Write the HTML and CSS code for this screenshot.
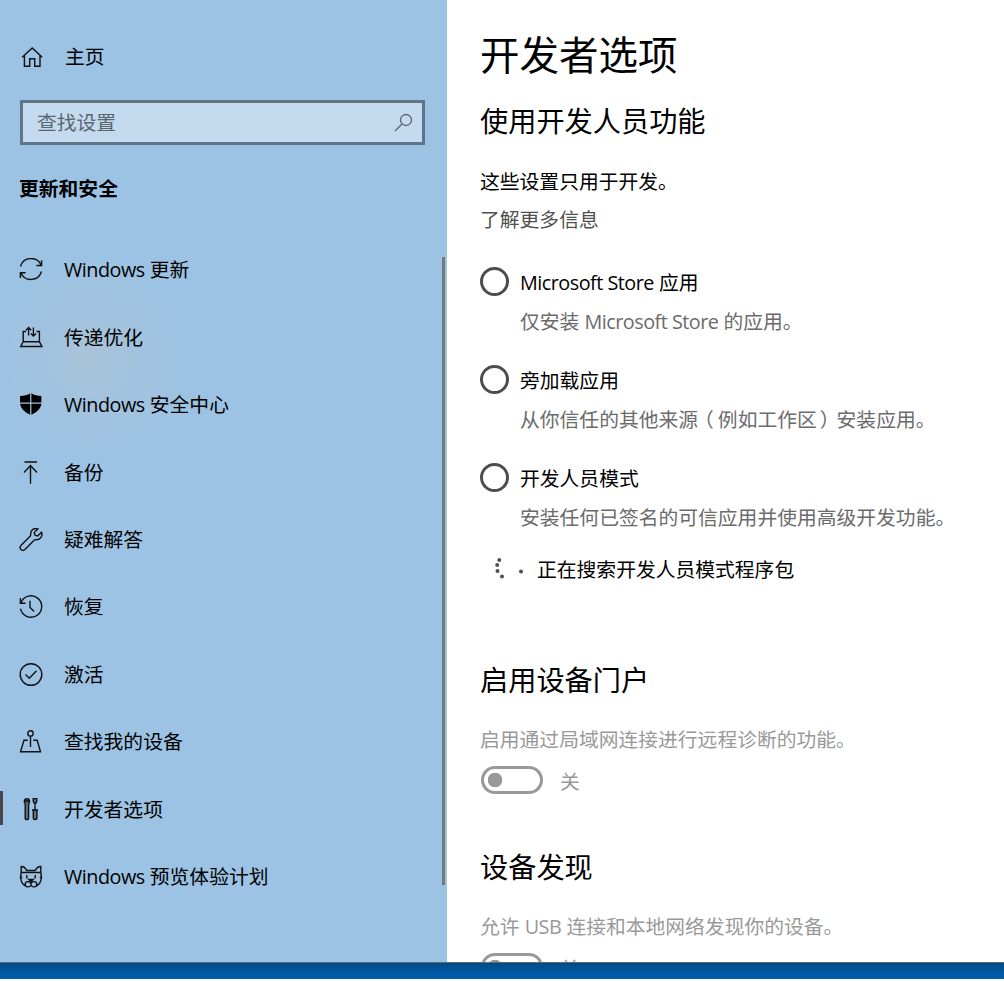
FILE: index.html
```html
<!DOCTYPE html>
<html lang="zh-CN">

<head>
    <meta charset="UTF-8" />
    <meta name="viewport" content="width=device-width, initial-scale=1.0" />
    <title>设置</title>
    <link rel="stylesheet" href="styles.css">
</head>

<body>
    <div class="window">
        <aside class="sidebar">
            <a class="home">
                <svg class="icon" viewBox="0 0 24 24"><path d="M2.2 11.3 12.2 1.9l10 9.4M4.4 9.5v10.8h5.3v-7.5h5v7.5h5.3V9.5" /></svg>
                <span>主页</span>
            </a>
            <div class="search">
                <span>查找设置</span>
                <svg class="search-icon" viewBox="0 0 20 20"><circle cx="12" cy="8" r="5.5" /><path d="M8 12 1 19" /></svg>
            </div>
            <h3 class="category">更新和安全</h3>

            <nav class="nav">
                <a class="nav-item">
                    <svg class="icon" viewBox="0 0 24 24"><path d="M1.5 8.5a11 11 0 0 1 20.7-1.2M22.6 2.2v5.3h-5.2M22.5 13.5a11 11 0 0 1-20.7 1.2M1.4 20v-5.3h5.2" /></svg>
                    <span><span class="latin">Windows</span> 更新</span>
                </a>
                <a class="nav-item">
                    <svg class="icon" viewBox="0 0 24 24"><path d="M7 5.5H4.2v10.200M17.500 5.500h2.900v10.200M4.200 15.700h16.200l2.500 4.800H1.700zM9.600 9.500V1.700M7 4.200l2.600-2.600 2.600 2.600M14.400 1.500v8.500M11.800 7.500l2.600 2.600L17 7.500" /></svg>
                    <span>传递优化</span>
                </a>
                <a class="nav-item">
                    <svg class="icon solid" viewBox="0 0 24 24"><path d="M11.2.3v9.3H1V3C5 3 8.8 2 11.2.3zM12.4.3c2.4 1.7 6.2 2.7 10 2.7v6.6h-10zM1.100 10.800h10.100v11C6 19.300 1.700 16 1.100 10.800zM12.400 10.800h10c-.6 5.200-4.800 8.500-10 11z" /></svg>
                    <span><span class="latin">Windows</span> 安全中心</span>
                </a>
                <a class="nav-item">
                    <svg class="icon" viewBox="0 0 24 24"><path d="M5.5 1H18M11.500 22.800V4.700M5 11.400l6.500-6.800 6.500 6.800" /></svg>
                    <span>备份</span>
                </a>
                <a class="nav-item">
                    <svg class="icon" viewBox="0 0 24 24"><path d="M18.900 1c-3.300-1.400-7.400 1-7.200 4.800 0 1 .2 1.600-.4 2.300L1.900 17.600c-2.400 2.700 1.300 6.300 4 3.900l9.400-9.400c.8-.7 1.500-.4 2.400-.4 4 0 6.300-4.300 4.800-7.500l-3.800 3.800-2.700-.8-.8-2.600z" /></svg>
                    <span>疑难解答</span>
                </a>
                <a class="nav-item">
                    <svg class="icon" viewBox="0 0 24 24"><path d="M2 7.700a10.700 10.700 0 1 1-.5 6M1.400 3.100v5.200h5.200M11 5.800v6.600l4.200 4" /></svg>
                    <span>恢复</span>
                </a>
                <a class="nav-item">
                    <svg class="icon" viewBox="0 0 24 24"><circle cx="12" cy="11.5" r="10.8" /><path d="m6.5 11.5 3.800 3.800 7.200-7.500" /></svg>
                    <span>激活</span>
                </a>
                <a class="nav-item">
                    <svg class="icon" viewBox="0 0 24 24"><circle cx="11.5" cy="3.4" r="2.7" /><path d="M11.5 6.100V17M8.700 10.300H5L1.500 21.700h20l-3.300-11.400h-3.900" /></svg>
                    <span>查找我的设备</span>
                </a>
                <a class="nav-item active">
                    <svg class="icon tools" viewBox="0 0 24 24"><path d="M7 .5c-2.300 1.500-2 4.200-.8 5v14.200c0 2.600 3.400 2.600 3.400 0V5.500c1.300-.8 1.600-3.500-.7-5v2.800H7zM14.200.5h3.600v2.700l-.9 1.800h-1.800l-.9-1.800zM16 5v6.800M13 12h6M14.300 12v7.700c0 2.400 3.600 2.400 3.600 0V12" /></svg>
                    <span>开发者选项</span>
                </a>
                <a class="nav-item">
                    <svg class="icon" viewBox="0 0 24 24"><path d="M2.200 8V1.500c2.600 0 4.500 1.800 5.500 4h8.600c1-2.200 2.900-4 5.500-4V8M1.500 7.500h21M2.200 8c-1.200 5-1.200 9.500 4.200 13M21.800 8c1.200 5 1.200 9.500-4.200 13M.8 12.500h2.400M20.800 12.500h2.400M7.800 10v3.500M16.200 10v3.500M12 17.500v2M12 18.500c-1.300-2.800-5.800-2.500-5.800.7 0 3.300 4.500 3.500 5.800 1 1.300 2.500 5.800 2.300 5.800-1 0-3.200-4.500-3.500-5.800-.7z" /><path class="nose" d="M9.800 14.500h4.400L12 16.800z" /></svg>
                    <span><span class="latin">Windows</span> 预览体验计划</span>
                </a>
            </nav>
            <div class="scrollbar"></div>
        </aside>

        <main class="content">
            <h1>开发者选项</h1>
            <h2>使用开发人员功能</h2>
            <p class="text">这些设置只用于开发。</p>
            <a class="link">了解更多信息</a>

            <div class="options">
                <label class="option">
                    <span class="radio"></span>
                    <span class="option-name"><span class="latin">Microsoft Store</span> 应用</span>
                    <span class="option-desc">仅安装 <span class="latin">Microsoft Store</span> 的应用。</span>
                </label>
                <label class="option">
                    <span class="radio"></span>
                    <span class="option-name">旁加载应用</span>
                    <span class="option-desc">从你信任的其他来源<span class="paren-open">（</span>例如工作区<span class="paren-close">）</span>安装应用。</span>
                </label>
                <label class="option">
                    <span class="radio"></span>
                    <span class="option-name">开发人员模式</span>
                    <span class="option-desc">安装任何已签名的可信应用并使用高级开发功能。</span>
                </label>
            </div>

            <div class="progress">
                <svg class="dots" viewBox="0 0 57 34">
                    <circle cx="19.3" cy="8" r="2" />
                    <circle cx="17.2" cy="13" r="2" />
                    <circle cx="17.5" cy="19" r="2" />
                    <circle cx="22" cy="24.5" r="2" />
                    <circle cx="41" cy="19.5" r="2" />
                </svg>
                <span>正在搜索开发人员模式程序包</span>
            </div>

            <section class="group">
                <h2>启用设备门户</h2>
                <p class="disabled">启用通过局域网连接进行远程诊断的功能。</p>
                <div class="toggle-row"><span class="toggle"></span><span>关</span></div>
            </section>
            <section class="group">
                <h2>设备发现</h2>
                <p class="disabled">允许 <span class="latin">USB</span> 连接和本地网络发现你的设备。</p>
                <div class="toggle-row"><span class="toggle"></span><span>关</span></div>
            </section>
        </main>
    </div>
    <div class="desktop"></div>
</body>

</html>
```
FILE: styles.css
```css
* {
    box-sizing: border-box;
}

body {
    margin: 0;
    height: 982px;
    background: #fcfcfc;
    overflow: hidden;
    font-family: "Open Sans", "Noto Sans CJK SC", sans-serif;
    font-size: 19.8px;
    font-weight: 400;
    color: #000;
    white-space: nowrap;
}

h1, h2, h3, p {
    margin: 0;
    font-weight: 400;
}

.window {
    display: flex;
    height: 963px;
    background: #fff;
    border-bottom: 1px solid #62676b;
    overflow: hidden;
}

.desktop {
    height: 16px;
    background: linear-gradient(#004b89, #005ba6 70%, #005dab);
}

.latin {
    letter-spacing: -0.5px;
}

/* sidebar */
.sidebar {
    position: relative;
    width: 447px;
    flex-shrink: 0;
    padding-top: 37px;
    background: radial-gradient(circle at 90px 360px, #aac3d8 0, #a2c3de 45px, #9cc3e4 110px);
}

.icon {
    width: 24px;
    height: 24px;
    margin: 0 21px 0 19px;
    flex-shrink: 0;
    fill: none;
    stroke: #111;
    stroke-width: 1.4;
}

.icon.solid {
    fill: #000;
    stroke: none;
}

.icon.tools {
    fill: #5d7488;
}

.nose {
    fill: #111;
}

.home {
    display: flex;
    align-items: center;
    height: 40px;
}

.home .icon {
    margin: 1px 21px 0 20px;
}

.home span {
    padding-bottom: 3px;
}

.search {
    display: flex;
    align-items: center;
    justify-content: space-between;
    width: 405px;
    height: 45px;
    margin: 22.5px 0 0 20px;
    padding: 0 8px 0 14px;
    background: #c4daee;
    border: 3px solid #5f7688;
    color: #596670;
}

.search span {
    padding-bottom: 1px;
}

.search-icon {
    width: 20px;
    height: 20px;
    fill: none;
    stroke: #596670;
    stroke-width: 1.3;
}

.category {
    margin: 24px 0 0 19px;
    line-height: 40px;
    font-size: 19.8px;
    font-weight: 700;
}

.nav {
    margin-top: 28px;
}

.nav-item {
    display: flex;
    align-items: center;
    height: 67.45px;
}

.nav-item > span {
    padding-bottom: 3px;
}

.active {
    background: linear-gradient(#47474a, #47474a) 0 45% / 3px 34px no-repeat;
}

.scrollbar {
    position: absolute;
    top: 257px;
    right: 2px;
    width: 3px;
    height: 628px;
    background: #77797b;
}

/* content */
.content {
    flex: 1;
    padding: 25px 0 0 33px;
}

h1 {
    font-size: 39.5px;
    line-height: 60px;
}

h2 {
    font-size: 28.2px;
    line-height: 40px;
}

h1 + h2 {
    margin-top: 16px;
}

.text {
    margin-top: 21px;
    line-height: 40px;
}

.link {
    display: block;
    margin-top: -2px;
    line-height: 40px;
    color: #505050;
}

.options {
    margin-top: 23px;
}

.option {
    display: grid;
    grid-template-columns: 40px auto;
    grid-template-rows: 40px 38px;
    height: 98px;
    line-height: 40px;
}

.radio {
    width: 29px;
    height: 29px;
    margin-top: 4px;
    border: 3px solid #4d4d4d;
    border-radius: 50%;
}

.option-desc {
    grid-column: 2;
    line-height: 37px;
    color: #6b6b6b;
}

.paren-open, .paren-close {
    display: inline-block;
    transform: translateX(-4px);
}

.paren-close {
    transform: translateX(3px);
}

.progress {
    display: flex;
    align-items: center;
    height: 40px;
    margin-top: -8px;
}

.progress span {
    padding-bottom: 2px;
}

.dots {
    width: 57px;
    height: 34px;
    fill: #505050;
}

.group {
    height: 187px;
}

.progress + .group {
    margin-top: 71px;
}

.disabled {
    margin-top: 20px;
    line-height: 40px;
    color: #999;
}

.toggle-row {
    display: flex;
    align-items: center;
    height: 40px;
    color: #999;
}

.toggle {
    width: 62px;
    height: 28px;
    margin: 0 17px 0 1px;
    border: 3px solid #999;
    border-radius: 14px;
    background: radial-gradient(circle at 11px 11px, #999 7px, transparent 7.5px);
}
```
